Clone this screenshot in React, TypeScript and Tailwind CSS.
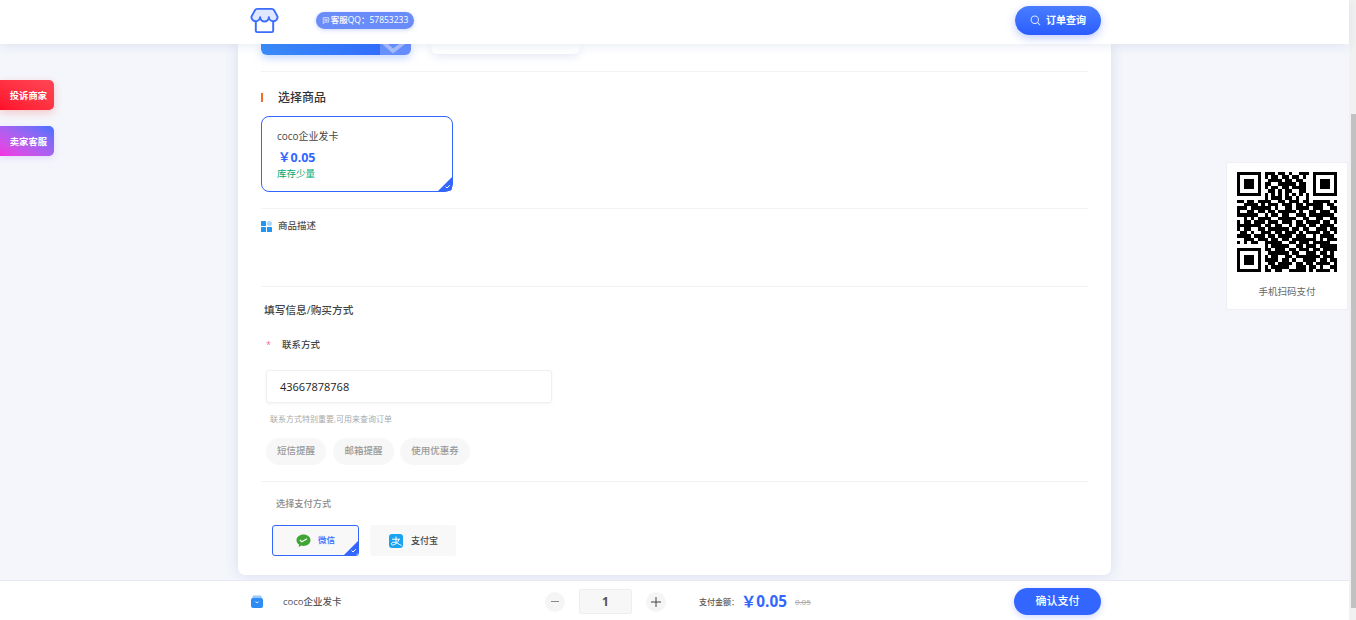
import React from "react";

const F = ["1111111", "1000001", "1011101", "1011101", "1011101", "1000001", "1111111"];
const topMid = [
  "1110110100111", "1011011011010", "0111101101100", "1100111110110", "1011011011110",
  "0110101100110", "1010101010101",
];
const botMid = [
  "110111011011101101111", "011111101100111011010", "101100110111111101110", "111101101001111011011",
  "011011110110110111101", "101111100111011010011", "110110011111010111101",
];
const rows: string[] = [
  ...F.map((f, i) => f + "0" + topMid[i] + "0" + f),
  "00000000" + "1011101101001" + "00000000",
  "11011011110011011101101111101",
  "00111101011101110110111110110",
  "11101111110100110111101110011",
  "10011011011011111010011011101",
  "11111100101101100111011111110",
  "00101011110011111001100110011",
  "10110111011101110110111101101",
  "11111110110110010111011011110",
  "10110011011111101101100111011",
  "01101001110110111010111101101",
  "11110111011011110111001011110",
  "00111011101101101111111010111",
  "10101100111110011011101111100",
  "00000000" + "101111100110111011111",
  ...F.map((f, i) => f + "0" + botMid[i]),
];

function QR() {
  return (
    <svg viewBox="0 0 29 29" shapeRendering="crispEdges" className="w-[100px] h-[100px] block">
      {rows.map((r, y) =>
        r.split("").map((c, x) => (c === "1" ? <rect key={x + "-" + y} x={x} y={y} width="1" height="1" fill="#000" /> : null))
      )}
    </svg>
  );
}

function Tick() {
  return (
    <svg viewBox="0 0 14 14" className="absolute right-0 bottom-0 w-[14px] h-[14px]">
      <path d="M14 0V11a3 3 0 0 1-3 3H0Z" fill="#3366ff" />
      <path d="M7.5 9.5l1.5 1.5 2.8-2.8" fill="none" stroke="#fff" strokeWidth="1" />
    </svg>
  );
}

function Divider() {
  return <div className="h-px bg-[#f2f3f5]" />;
}

export default function App() {
  return (
    <div className="relative flex h-[620px] w-full overflow-hidden bg-[#f4f6fb] font-['Open_Sans','Noto_Sans_CJK_SC',sans-serif]">
      <div className="relative flex flex-1 flex-col min-w-0">
        <header className="relative z-10 flex h-[44px] shrink-0 items-center bg-white pb-[3px] pl-[250px] pr-[248px] shadow-[0_2px_10px_rgba(60,80,160,0.10)]">
          <svg viewBox="0 0 30 27" className="h-[27px] w-[29px] shrink-0" fill="none">
            <path d="M7.5 1.5H22.5Q24 1.5 25 3L28.5 9.5A4.5 4.5 0 0 1 19.5 10A4.5 4.5 0 0 1 10.5 10A4.5 4.5 0 0 1 1.5 9.5L5 3Q6 1.5 7.5 1.5Z" fill="#e0e8ff" stroke="#3a6cff" strokeWidth="2" strokeLinejoin="round" />
            <path d="M6 14.5V24a1.5 1.5 0 0 0 1.5 1.5H22.5A1.5 1.5 0 0 0 24 24V14.5" stroke="#3a6cff" strokeWidth="2" />
          </svg>
          <div className="ml-[37px] flex h-[17px] w-[98px] items-center justify-center gap-[1px] rounded-full bg-[#6a8cf8] text-[8.5px] font-medium text-white shadow-[0_1px_4px_rgba(80,110,240,0.3)]">
            <svg viewBox="0 0 10 10" className="h-[9px] w-[8px]" fill="none" stroke="#e6ecff" strokeWidth="1">
              <path d="M1.5 1.5H8.5V7H3.5L1.5 9Z" />
              <path d="M3 3.5H7M3 5.3H7" />
            </svg>
            <span>客服QQ：57853233</span>
          </div>
          <div className="ml-auto flex h-[29px] w-[86px] items-center justify-center gap-[5px] rounded-full bg-gradient-to-b from-[#4a7dff] to-[#2b5cff] text-[10px] font-semibold text-white shadow-[0_3px_8px_rgba(50,90,255,0.3)]">
            <svg viewBox="0 0 12 12" className="h-[11px] w-[11px]" fill="none" stroke="#dfe7ff" strokeWidth="1.1">
              <circle cx="5.2" cy="5.2" r="4" />
              <path d="M8.2 8.2L11 11" />
            </svg>
            <span>订单查询</span>
          </div>
        </header>

        <main className="flex-1 overflow-hidden min-h-0">
          <div className="mx-auto flex h-[531px] w-[873px] flex-col rounded-b-[7px] bg-white px-[23px] shadow-[0_0_14px_rgba(60,80,170,0.14)]">
            <div className="flex h-[11px] shrink-0 items-start gap-[20px]">
              <div className="relative h-[11px] w-[150px] overflow-hidden rounded-b-[6px] bg-gradient-to-r from-[#3a8cfa] to-[#3366ff] shadow-[0_3px_8px_rgba(50,120,255,0.3)]">
                <div className="absolute right-0 top-0 h-[11px] w-[31px] bg-white/25">
                  <svg viewBox="0 0 31 11" className="h-[11px] w-[31px]" fill="none">
                    <path d="M4 -1L13 7L26 -3" stroke="#a9bdfd" strokeWidth="4" />
                  </svg>
                </div>
              </div>
              <div className="h-[10px] w-[149px] rounded-b-[6px] bg-white shadow-[0_3px_8px_rgba(60,80,170,0.12)]" />
            </div>

            <div className="mt-[16px]"><Divider /></div>

            <div className="mt-[16px] flex h-[18px] items-center">
              <div className="h-[9px] w-[2px] bg-[#f56a2a]" />
              <span className="ml-[15px] mt-[2px] text-[12px] font-medium text-[#333]">选择商品</span>
            </div>

            <div className="relative mt-[10px] h-[76px] w-[192px] rounded-[8px] border border-[#3366ff] bg-white pl-[15px]">
              <div className="mt-[11px] h-[16px] text-[10px] leading-[16px] text-[#444]">coco企业发卡</div>
              <div className="mt-[5px] h-[18px] pl-[1px] text-[12.5px] font-bold leading-[18px] text-[#3366ff]">￥0.05</div>
              <div className="mt-[1px] h-[12px] text-[9.5px] leading-[12px] text-[#00a870]">库存少量</div>
              <Tick />
            </div>

            <div className="mt-[16px]"><Divider /></div>

            <div className="mt-[11px] flex h-[12px] items-center">
              <svg viewBox="0 0 11 11" className="h-[11px] w-[11px]">
                <rect x="0" y="0" width="5" height="5" rx="0.5" fill="#2196f3" />
                <rect x="0" y="6" width="5" height="5" rx="0.5" fill="#2196f3" />
                <rect x="6" y="6" width="5" height="5" rx="0.5" fill="#2196f3" />
                <circle cx="8.5" cy="2.5" r="2.5" fill="#a9d6fb" />
              </svg>
              <span className="ml-[6px] text-[9.5px] font-medium text-[#555]">商品描述</span>
            </div>

            <div className="mt-[54px]"><Divider /></div>

            <div className="mt-[16px] h-[14px] pl-[3px] text-[10.7px] font-medium leading-[14px] text-[#444]">填写信息/购买方式</div>

            <div className="mt-[22px] flex h-[12px] items-center pl-[5px]">
              <span className="w-[16px] text-[9px] leading-[12px] text-[#f56c8c]">*</span>
              <span className="text-[9.5px] font-medium text-[#444]">联系方式</span>
            </div>

            <div className="ml-[5px] mt-[19px] flex h-[33px] w-[286px] items-center rounded-[3px] border border-[#f0f0f0] bg-white pl-[13px] pt-[2px] text-[11px] text-[#222] shadow-[0_1px_3px_rgba(0,0,0,0.05)]">
              43667878768
            </div>

            <div className="mt-[11px] h-[10px] pl-[9px] text-[8px] leading-[10px] text-[#aaa]">联系方式特别重要,可用来查询订单</div>

            <div className="ml-[5px] mt-[14px] flex h-[27px] text-[9.5px] font-medium text-[#999]">
              <div className="flex w-[60px] items-center justify-center rounded-full bg-[#f7f7f7]">短信提醒</div>
              <div className="ml-[7px] flex w-[61px] items-center justify-center rounded-full bg-[#f7f7f7]">邮箱提醒</div>
              <div className="ml-[6px] flex w-[70px] items-center justify-center rounded-full bg-[#f7f7f7]">使用优惠券</div>
            </div>

            <div className="mt-[16px]"><Divider /></div>

            <div className="mt-[16px] h-[12px] pl-[15px] text-[9.2px] font-medium leading-[12px] text-[#888]">选择支付方式</div>

            <div className="ml-[11px] mt-[15px] flex h-[31px] gap-[11px]">
              <div className="relative flex w-[87px] items-center rounded-[3px] border border-[#3366ff] bg-[#f8f8f8] pl-[23px]">
                <svg viewBox="0 0 15 14" className="h-[14px] w-[15px]">
                  <path d="M7.5 0.5C3.6 0.5 0.5 3 0.5 6.2c0 1.8 1 3.4 2.6 4.5L2.7 13l2.6-1.4c.7.2 1.4.3 2.2.3 3.9 0 7-2.5 7-5.7S11.4.5 7.5.5Z" fill="#3fa535" />
                  <path d="M3.8 5.8l2 2 5.2-3" fill="none" stroke="#fff" strokeWidth="1.2" />
                </svg>
                <span className="ml-[7px] text-[8.5px] font-medium text-[#3366ff]">微信</span>
                <Tick />
              </div>
              <div className="flex w-[86px] items-center rounded-[3px] bg-[#f8f8f8] pl-[19px]">
                <svg viewBox="0 0 14 14" className="h-[14px] w-[14px]">
                  <rect width="14" height="14" rx="3" fill="#1aa3f0" />
                  <path d="M3 5.2H11M7 2.5V8M10 5.2C9 8.5 6 11 3.6 11 1.8 11 2 8.2 4.5 8.2 7 8.2 9.5 10 12.5 11.5" fill="none" stroke="#fff" strokeWidth="1" />
                </svg>
                <span className="ml-[8px] text-[9px] font-medium text-[#444]">支付宝</span>
              </div>
            </div>
          </div>
        </main>

        <footer className="relative z-10 flex h-[40px] shrink-0 items-center border-t border-[#e6e9f2] bg-white pl-[251px] pr-[248px] pt-[2px]">
          <svg viewBox="0 0 12 13" className="h-[13px] w-[12px] shrink-0">
            <path d="M2 0.5H10L11 3H1Z" fill="#9cc8fb" />
            <rect x="0" y="3" width="12" height="10" rx="2" fill="#2f8cf5" />
            <path d="M4.3 6.5c.4 1.4 3 1.4 3.4 0" fill="none" stroke="#fff" strokeWidth="0.8" />
          </svg>
          <span className="ml-[20px] mt-[2px] w-[262px] shrink-0 text-[9.5px] font-medium text-[#555]">coco企业发卡</span>
          <div className="flex h-[20px] w-[20px] shrink-0 items-center justify-center rounded-full bg-[#f5f5f5]">
            <div className="h-px w-[8px] bg-[#888]" />
          </div>
          <div className="ml-[14px] flex h-[25px] w-[53px] shrink-0 items-center justify-center rounded-[2px] border border-[#eee] bg-[#f7f7f7] text-[12px] font-bold text-[#555]">1</div>
          <div className="relative ml-[14px] flex h-[20px] w-[20px] shrink-0 items-center justify-center rounded-full bg-[#f5f5f5]">
            <svg viewBox="0 0 10 10" className="h-[10px] w-[10px]" stroke="#444" strokeWidth="1">
              <path d="M0 5H10M5 0V10" />
            </svg>
          </div>
          <span className="ml-[33px] w-[42px] shrink-0 text-[8px] font-medium text-[#555]">支付金额：</span>
          <span className="text-[15.3px] font-bold leading-none text-[#3366ff]">￥0.05</span>
          <span className="ml-[8px] text-[8px] text-[#aaa] line-through">0.05</span>
          <div className="ml-auto flex h-[27px] w-[87px] items-center justify-center rounded-full bg-[#3366ff] text-[11px] font-medium text-white shadow-[0_2px_6px_rgba(50,90,255,0.25)]">确认支付</div>
        </footer>

        <div className="absolute left-0 top-[80px] z-20 flex h-[30px] w-[54px] items-center justify-end rounded-r-[5px] bg-gradient-to-tr from-[#ff0a2a] to-[#ff4555] pr-[7px] pt-[2px] text-[9.3px] font-bold text-white shadow-[0_3px_8px_rgba(255,60,60,0.25)]">投诉商家</div>
        <div className="absolute left-0 top-[126px] z-20 flex h-[30px] w-[54px] items-center justify-end rounded-r-[5px] bg-gradient-to-tr from-[#f52fe0] to-[#3f6fff] pr-[7px] pt-[2px] text-[9.3px] font-bold text-white shadow-[0_2px_6px_rgba(120,80,255,0.15)]">卖家客服</div>

        <div className="absolute left-[1226px] top-[162px] z-20 flex h-[148px] w-[122px] flex-col items-center border border-[#eeeff3] bg-white pt-[9px]">
          <QR />
          <div className="mt-[13px] text-[9.5px] leading-[14px] text-[#666]">手机扫码支付</div>
        </div>
      </div>

      <div className="flex w-[7px] shrink-0 flex-col bg-[#f1f1f1] pl-[2px]">
        <div className="h-[114px] shrink-0" />
        <div className="h-[494px] bg-[#c1c1c1]" />
      </div>
    </div>
  );
}
